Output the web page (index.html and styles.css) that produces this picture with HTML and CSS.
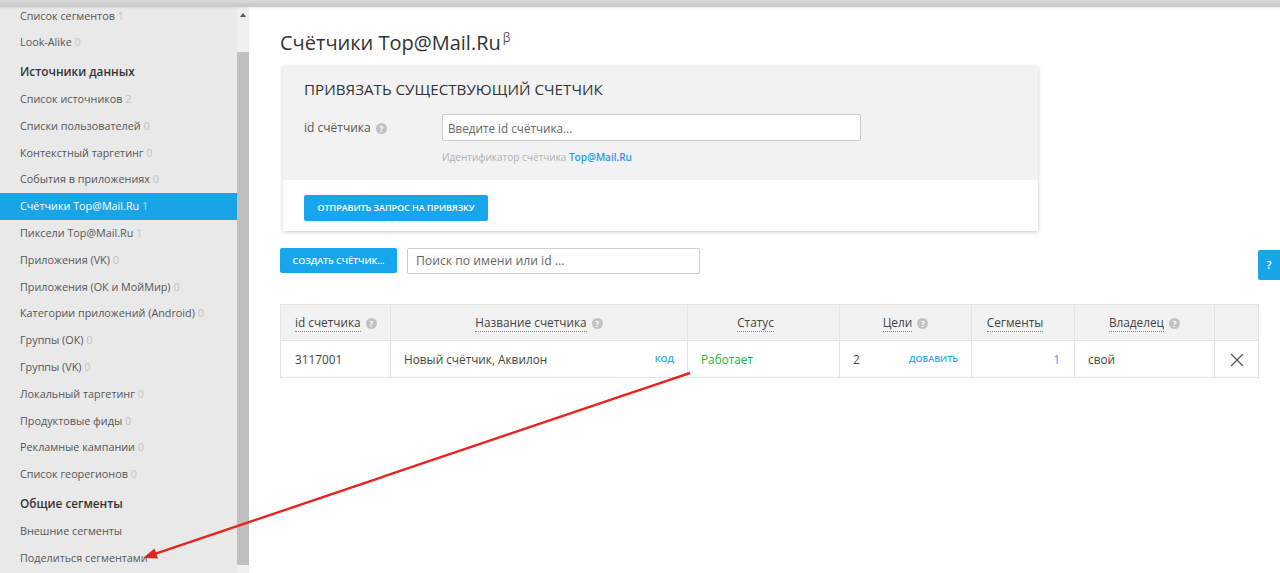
FILE: index.html
```html
<!DOCTYPE html>
<html lang="ru">
<head>
    <meta charset="UTF-8">
    <title>Счётчики Top@Mail.Ru</title>
    <link rel="stylesheet" href="styles.css">
</head>
<body>
    <div class="topbar"></div>
    <div class="layout">
        <aside class="sidebar">
            <ul class="nav">
                <li>Список сегментов <span class="count">1</span></li>
                <li>Look-Alike <span class="count">0</span></li>
                <li class="nav-title">Источники данных</li>
                <li>Список источников <span class="count">2</span></li>
                <li>Списки пользователей <span class="count">0</span></li>
                <li>Контекстный таргетинг <span class="count">0</span></li>
                <li>События в приложениях <span class="count">0</span></li>
                <li class="active">Счётчики Top@Mail.Ru <span class="count">1</span></li>
                <li>Пиксели Top@Mail.Ru <span class="count">1</span></li>
                <li>Приложения (VK) <span class="count">0</span></li>
                <li>Приложения (ОК и МойМир) <span class="count">0</span></li>
                <li>Категории приложений (Android) <span class="count">0</span></li>
                <li>Группы (ОК) <span class="count">0</span></li>
                <li>Группы (VK) <span class="count">0</span></li>
                <li>Локальный таргетинг <span class="count">0</span></li>
                <li>Продуктовые фиды <span class="count">0</span></li>
                <li>Рекламные кампании <span class="count">0</span></li>
                <li>Список георегионов <span class="count">0</span></li>
                <li class="nav-title">Общие сегменты</li>
                <li>Внешние сегменты</li>
                <li>Поделиться сегментами</li>
            </ul>
        </aside>
        <div class="scrollbar">
            <span class="scroll-up"></span>
            <span class="scroll-thumb"></span>
        </div>
        <main class="content">
            <h1 class="page-title">Счётчики Top@Mail.Ru<sup>β</sup></h1>

            <div class="card">
                <div class="card-top">
                    <h2 class="card-title">ПРИВЯЗАТЬ СУЩЕСТВУЮЩИЙ СЧЕТЧИК</h2>
                    <div class="form-row">
                        <label class="form-label">id счётчика <span class="qicon">?</span></label>
                        <div class="form-field">
                            <input class="text-input counter-input" type="text" placeholder="Введите id счётчика...">
                            <div class="hint">Идентификатор счётчика <a href="#">Top@Mail.Ru</a></div>
                        </div>
                    </div>
                </div>
                <div class="card-bottom">
                    <button class="btn">ОТПРАВИТЬ ЗАПРОС НА ПРИВЯЗКУ</button>
                </div>
            </div>

            <div class="toolbar">
                <button class="btn btn-create">СОЗДАТЬ СЧЁТЧИК...</button>
                <input class="text-input search-input" type="text" placeholder="Поиск по имени или id ...">
            </div>

            <table class="counters">
                <colgroup>
                    <col style="width:110px">
                    <col style="width:297px">
                    <col style="width:152px">
                    <col style="width:132px">
                    <col style="width:103px">
                    <col style="width:140px">
                    <col style="width:44px">
                </colgroup>
                <thead>
                    <tr>
                        <th class="left"><span class="dotted">id счетчика</span> <span class="qicon">?</span></th>
                        <th><span class="dotted">Название счетчика</span> <span class="qicon">?</span></th>
                        <th><span class="dotted">Статус</span><span class="sort-space"></span></th>
                        <th><span class="dotted">Цели</span> <span class="qicon">?</span></th>
                        <th><span class="dotted">Сегменты</span><span class="sort-space"></span></th>
                        <th><span class="dotted">Владелец</span> <span class="qicon">?</span></th>
                        <th></th>
                    </tr>
                </thead>
                <tbody>
                    <tr>
                        <td>3117001</td>
                        <td><div class="split">Новый счётчик, Аквилон <a href="#" class="small-link">КОД</a></div></td>
                        <td class="status-ok">Работает</td>
                        <td><div class="split">2 <a href="#" class="small-link">ДОБАВИТЬ</a></div></td>
                        <td class="right"><a href="#" class="num-link">1</a></td>
                        <td>свой</td>
                        <td class="center">
                            <svg class="remove" width="14" height="14" viewBox="0 0 14 14">
                                <path d="M1 1 L13 13 M13 1 L1 13" stroke="#555" stroke-width="1.3" fill="none"/>
                            </svg>
                        </td>
                    </tr>
                </tbody>
            </table>
        </main>
    </div>

    <a href="#" class="help-tab">?</a>

    <svg class="annotation" width="1280" height="573" viewBox="0 0 1280 573">
        <line x1="690" y1="373" x2="155" y2="553.8" stroke="#e52420" stroke-width="2.4"/>
        <polygon points="143,558 158,558.5 154.5,548.5" fill="#e52420"/>
    </svg>
</body>
</html>
```

FILE: styles.css
```css
* {
    margin: 0;
    padding: 0;
    box-sizing: border-box;
}

body {
    font-family: 'Open Sans', 'Noto Sans', sans-serif;
    color: #444;
    background: #fff;
    width: 1280px;
    height: 573px;
    overflow: hidden;
}

.topbar {
    height: 7px;
    background: linear-gradient(#d9d9d9, #c6c6c6);
    box-shadow: 0 1px 2px rgba(0, 0, 0, 0.08);
    position: relative;
    z-index: 2;
}

.layout {
    display: flex;
    height: 566px;
}

/* sidebar */
.sidebar {
    width: 238px;
    background: #e9e9e9;
    overflow: hidden;
}

.nav {
    list-style: none;
    margin-top: -4.5px;
}

.nav li {
    height: 26.8px;
    line-height: 26.8px;
    padding-left: 20px;
    font-size: 10.8px;
    color: #555;
    white-space: nowrap;
}

.nav .count {
    color: #c2c2c2;
}

.nav li.nav-title {
    height: 30px;
    line-height: 30px;
    font-size: 11.8px;
    font-weight: 600;
    color: #333;
}

.nav li.active {
    background: #19a4e8;
    color: #fff;
}

.nav li.active .count {
    color: #a6dcf7;
}

.scrollbar {
    width: 12px;
    background: #f0f0f0;
    display: flex;
    flex-direction: column;
    align-items: center;
}

.scroll-up {
    margin-top: 6px;
    width: 0;
    height: 0;
    border-left: 3px solid transparent;
    border-right: 3px solid transparent;
    border-bottom: 4px solid #555;
}

.scroll-thumb {
    margin-top: 35px;
    width: 12px;
    height: 513px;
    background: #bfbfbf;
}

/* main */
.content {
    flex: 1;
    padding: 17px 21px 0 31px;
}

.page-title {
    font-size: 20px;
    font-weight: 400;
    color: #333;
    line-height: 28px;
}

.page-title sup {
    font-size: 12px;
    color: #555;
    margin-left: 2px;
    vertical-align: 8px;
}

.card {
    width: 755px;
    margin: 9px 0 0 3px;
    box-shadow: 0 1px 4px rgba(0, 0, 0, 0.22);
}

.card-top {
    background: #f2f2f2;
    padding: 12px 21px 16px;
}

.card-title {
    font-size: 15.2px;
    font-weight: 400;
    color: #333;
    line-height: 22px;
}

.form-row {
    display: flex;
    margin-top: 14px;
}

.form-label {
    width: 138px;
    font-size: 12px;
    color: #555;
    line-height: 27px;
}

.qicon {
    display: inline-block;
    width: 11px;
    height: 11px;
    border-radius: 50%;
    background: #c2c2c2;
    color: #fff;
    font-size: 8px;
    font-weight: 700;
    line-height: 11px;
    text-align: center;
    vertical-align: 0;
    margin-left: 2px;
}

.text-input {
    height: 27px;
    border: 1px solid #cdcdcd;
    border-radius: 2px;
    background: #fff;
    padding: 0 5px;
    font-family: 'Open Sans', 'Noto Sans', sans-serif;
    font-size: 11.7px;
    color: #333;
    outline: none;
}

.text-input::placeholder {
    color: #666;
}

.counter-input {
    width: 419px;
}

.hint {
    margin-top: 9px;
    font-size: 10px;
    color: #b0b0b0;
    line-height: 14px;
}

.hint a {
    color: #1a9fe0;
    font-weight: 600;
    text-decoration: none;
}

.card-bottom {
    background: #fff;
    padding: 14px 21px 10px;
}

.btn {
    height: 26px;
    padding: 0 13.5px;
    border: none;
    border-radius: 2px;
    background: #17a6ec;
    color: #fff;
    font-family: 'Open Sans', 'Noto Sans', sans-serif;
    font-size: 9px;
    font-weight: 600;
    letter-spacing: -0.05px;
}

.toolbar {
    display: flex;
    gap: 10px;
    margin-top: 17px;
}

.btn-create {
    width: 117px;
    height: 25px;
    padding: 0;
}

.search-input {
    width: 293px;
    height: 26px;
    padding: 0 8px;
    font-size: 12.2px;
}

/* table */
.counters {
    margin-top: 30px;
    width: 978px;
    border-collapse: collapse;
    table-layout: fixed;
    font-size: 11.8px;
}

.counters th,
.counters td {
    border: 1px solid #e3e3e3;
    padding: 0 13px;
}

.counters th {
    height: 36px;
    background: #f2f2f2;
    font-weight: 400;
    color: #444;
    text-align: center;
    white-space: nowrap;
}

.counters th.left {
    text-align: left;
    padding-left: 14px;
}

.counters td {
    height: 37px;
    color: #444;
}

.counters td:first-child {
    padding-left: 14px;
}

.dotted {
    border-bottom: 1px dotted #888;
    padding-bottom: 1px;
}

.sort-space {
    display: inline-block;
    width: 16px;
}

.split {
    display: flex;
    justify-content: space-between;
    align-items: center;
}

.small-link {
    font-size: 9px;
    font-weight: 600;
    color: #2aa8e2;
    text-decoration: none;
}

.counters td.status-ok {
    color: #25b33a;
}

.counters td.right {
    text-align: right;
    padding-right: 14px;
}

.counters td.center {
    text-align: center;
}

.num-link {
    color: #2aa8e2;
    text-decoration: none;
}

.remove {
    vertical-align: middle;
}

/* overlays */
.help-tab {
    position: fixed;
    top: 250px;
    right: 0;
    width: 22px;
    height: 30px;
    background: #19a4e8;
    color: #fff;
    font-size: 11px;
    font-weight: 600;
    line-height: 30px;
    text-align: center;
    text-decoration: none;
    border-radius: 2px 0 0 2px;
}

.annotation {
    position: fixed;
    top: 0;
    left: 0;
    pointer-events: none;
}
```
